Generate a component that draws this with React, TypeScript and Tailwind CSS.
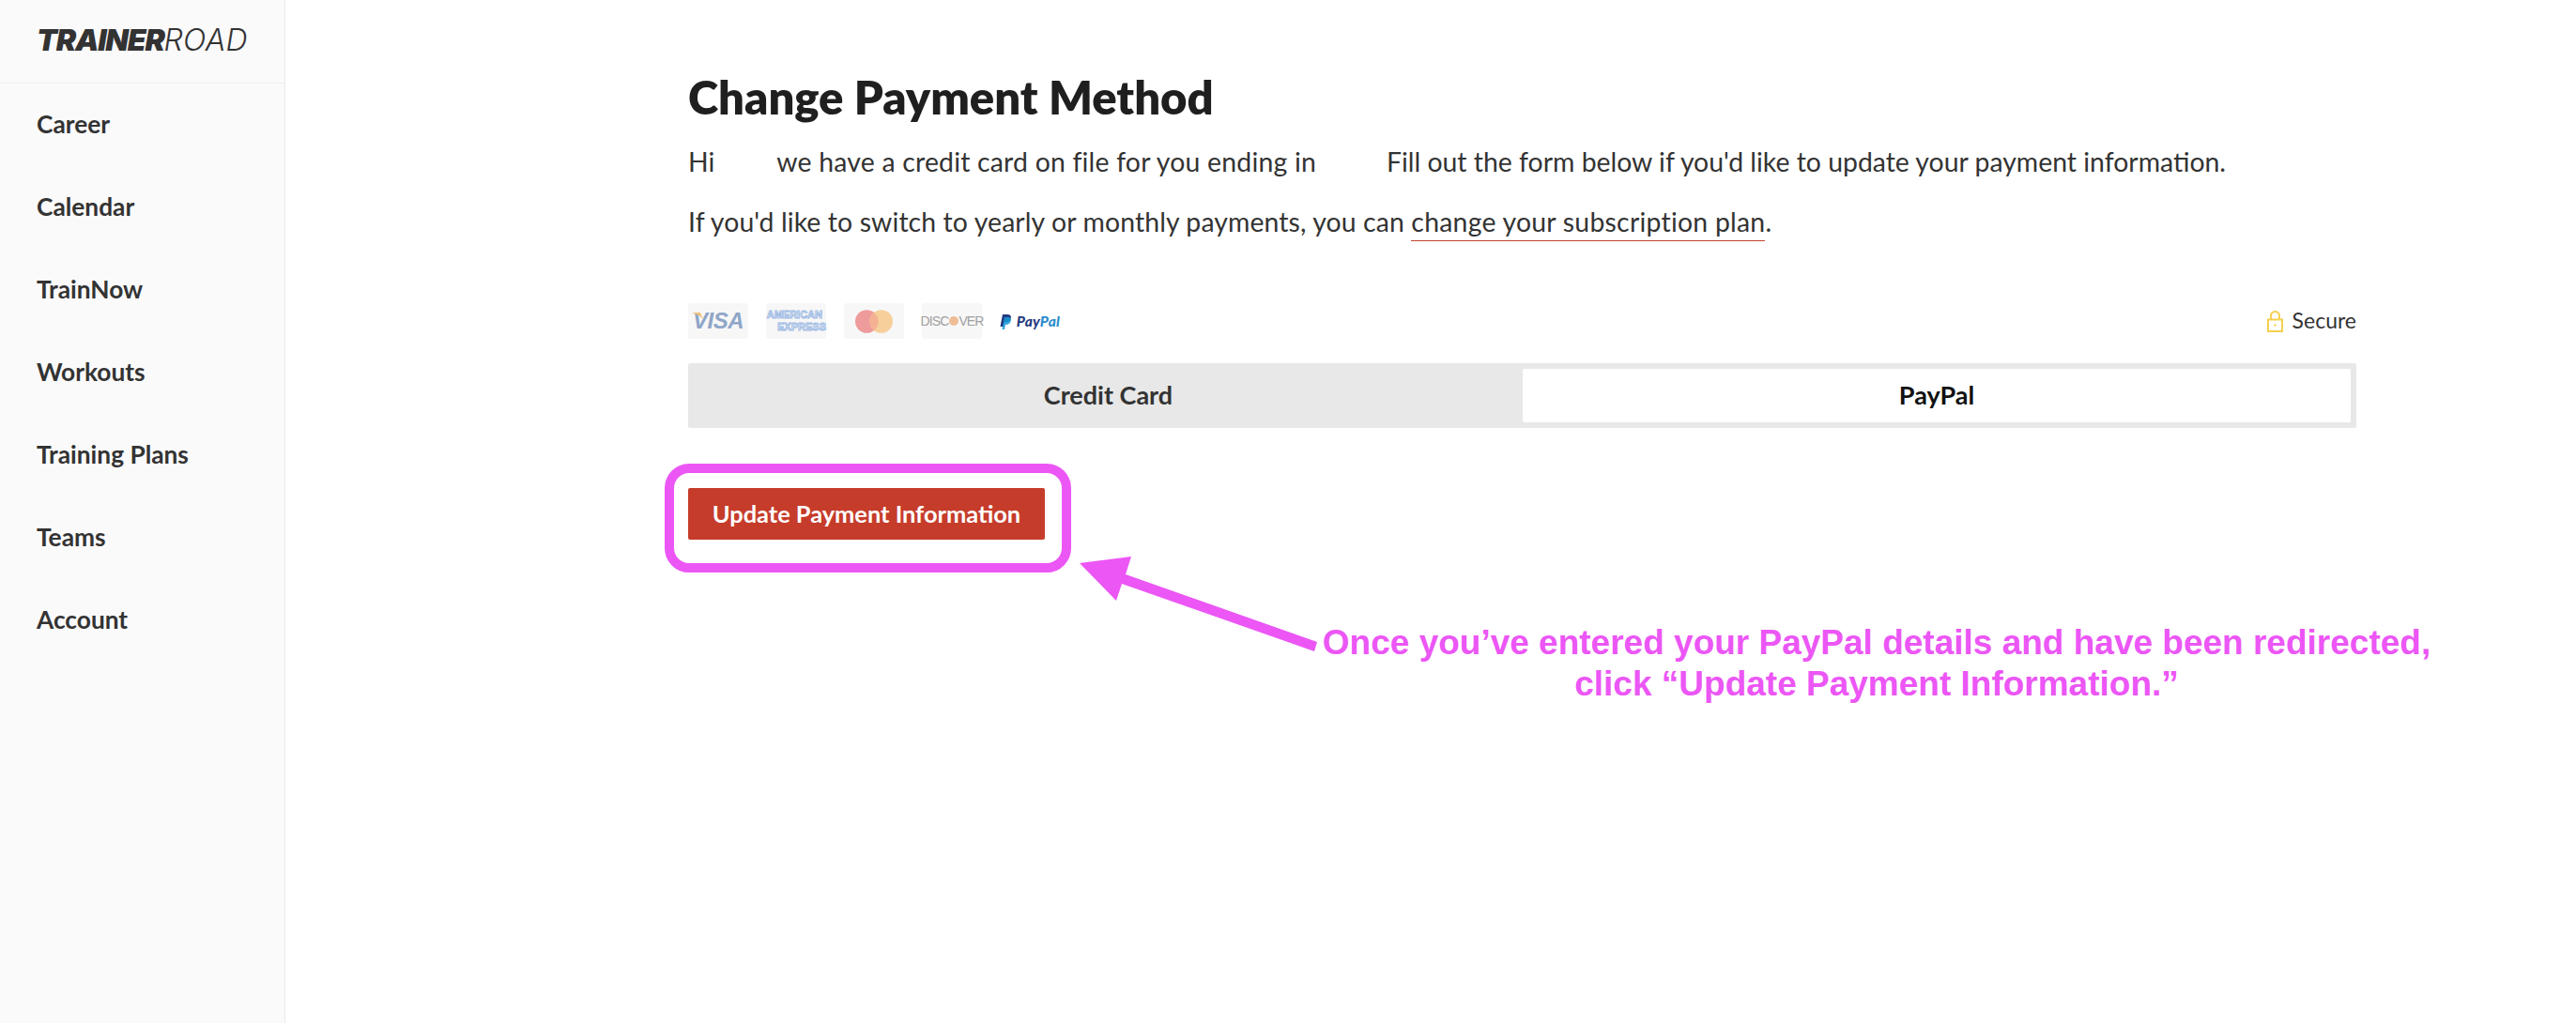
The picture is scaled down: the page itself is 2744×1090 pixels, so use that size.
import React from "react";

const navItems = ["Career", "Calendar", "TrainNow", "Workouts", "Training Plans", "Teams", "Account"];

const body = "font-['Lato','Open_Sans',sans-serif]";

const CardBox = ({ children }: { children: React.ReactNode }) => (
  <div className="relative w-16 h-[38px] bg-[#f7f7f7] rounded-[3px] flex items-center justify-center">
    {children}
  </div>
);

const PayPalLogo = () => (
  <div className="w-16 h-[38px] flex items-center gap-[5px] pt-[2px]">
    <svg width="13" height="16" viewBox="0 0 13 16">
      <path d="M3 0h5c3 0 4.500 1.500 4 4-.5 3-2.500 4.500-5.500 4.500H5L4 13H0.500z" fill="#253b80" />
      <path d="M5 3h4c2.500 0 3.500 1.200 3 3.500-.5 3-2.500 4.500-5.500 4.500H6l-.8 5H2.500z" fill="#179bd7" opacity="0.85" />
    </svg>
    <span className="font-['Lato',sans-serif] font-black italic text-[15.500px] leading-none tracking-[0.2px] text-[#253b80]">
      Pay<span className="text-[#2a8ccb]">Pal</span>
    </span>
  </div>
);

const Annotation = () => (
  <>
    <div className="absolute left-[708px] top-[494px] w-[433px] h-[116px] border-[10px] border-[#ec56f5] rounded-[26px]" />
    <svg className="absolute left-[1140px] top-[585px]" width="270" height="115" viewBox="1140 585 270 115">
      <path d="M1150 600 L1205 593 L1199 612 L1403 684 L1400 694 L1195 622 L1189 640 Z" fill="#ec56f5" />
    </svg>
    <div className="absolute left-[1400px] top-[663px] w-[1198px] text-center font-['Liberation_Sans',sans-serif] font-bold text-[37px] leading-[44px] text-[#ec56f5]">
      Once you’ve entered your PayPal details and have been redirected,
      <br />
      click “Update Payment Information.”
    </div>
  </>
);

export default function App() {
  return (
    <div className={`relative flex h-[1090px] bg-white text-[#333] ${body}`}>
      <aside className="w-[304px] shrink-0 bg-[#fafafa] border-r border-[#ebebeb]">
        <div className="h-[89px] border-b border-[#f0f0f0] pl-[39px] pb-[2px] flex items-center">
          <span className="font-['Inter',sans-serif] italic text-[32px] leading-none tracking-[-1.200px] text-[#333]">
            <span className="font-black">TRAINER</span>
            <span className="font-light tracking-[0.200px]">ROAD</span>
          </span>
        </div>
        <nav className="flex flex-col">
          {navItems.map((item) => (
            <a key={item} className="h-[88px] pl-[39px] flex items-center text-[26.300px] font-bold text-[#333]">
              {item}
            </a>
          ))}
        </nav>
      </aside>

      <main className="w-[1777px] ml-[429px] pt-[73px]">
        <h1 className="text-[49px] leading-[60px] font-extrabold text-[#1f1f1f]">Change Payment Method</h1>
        <p className="mt-[19px] text-[28.400px] leading-[40px] text-[#333]">
          Hi<span className="inline-block w-[66px]" />
          <span className="tracking-[0.200px]">we have a credit card on file for you ending in</span>
          <span className="inline-block w-[75px]" />Fill out the form below if you'd like to update your payment information.
        </p>
        <p className="mt-[24px] text-[28.400px] leading-[40px] text-[#333]">
          <span className="tracking-[0.110px]">If you'd like to switch to yearly or monthly payments, you can </span>
          <a className="border-b border-[#c4452f] pb-[3px] tracking-[0.240px]">change your subscription plan</a>.
        </p>

        <div className="mt-[67px] flex items-center justify-between h-[38px]">
          <div className="flex gap-[19px]">
            <CardBox>
              <svg className="absolute left-[4px] top-[10px]" width="12" height="8" viewBox="0 0 12 8">
                <path d="M0 0h9l3 7C9 3.500 5 1.500 0 0z" fill="#f0c27a" />
              </svg>
              <span className="font-['Liberation_Sans',sans-serif] font-bold italic text-[24px] tracking-[-0.500px] leading-none text-[#8fa6c8]">VISA</span>
            </CardBox>
            <CardBox>
              <span className="font-['Liberation_Sans',sans-serif] font-bold text-[11px] leading-[13px] text-white [-webkit-text-stroke:1px_#9fbbe4] text-right w-16">
                <span className="block pr-1">AMERICAN</span>
                <span className="block">EXPRESS</span>
              </span>
            </CardBox>
            <CardBox>
              <svg width="40" height="25" viewBox="0 0 40 25">
                <circle cx="12.300" cy="12.500" r="12.300" fill="#ee9b9b" />
                <circle cx="27.700" cy="12.500" r="12.300" fill="#f6cf9b" />
                <path d="M20 2.900a12.300 12.300 0 0 1 0 19.200a12.300 12.300 0 0 1 0-19.200z" fill="#f5b193" />
              </svg>
            </CardBox>
            <CardBox>
              <span className="flex items-center font-['Liberation_Sans',sans-serif] text-[14px] tracking-[-0.900px] text-[#a0a0a0]">
                DISC<span className="w-[10px] h-[10px] rounded-full bg-[#eebd95] mx-[0.500px]" />VER
              </span>
            </CardBox>
            <PayPalLogo />
          </div>
          <div className="flex items-center gap-[10px] text-[23px] text-[#333]">
            <svg width="17" height="23" viewBox="0 0 17 23" fill="none" stroke="#f5cf4f" strokeWidth="2">
              <rect x="1" y="9.500" width="15" height="12.500" />
              <path d="M4 9.500V5.500a4.500 4.500 0 0 1 9 0v4" />
              <circle cx="8.500" cy="15.500" r="1.200" fill="#f5cf4f" stroke="none" />
            </svg>
            <span className="pb-[2px]">Secure</span>
          </div>
        </div>

        <div className="mt-[26px] h-[69px] bg-[#e8e8e8] rounded-[2px] p-[6px] flex">
          <div className="w-[883px] flex items-center justify-center text-[27px] font-bold text-[#333]">Credit Card</div>
          <div className="flex-1 bg-white rounded-[2px] flex items-center justify-center text-[27px] font-bold text-[#111]">PayPal</div>
        </div>

        <button className="block mt-[64px] w-[380px] h-[55px] bg-[#c63c2b] rounded-[2px] text-white text-[25.400px] font-bold">
          Update Payment Information
        </button>
      </main>

      <Annotation />
    </div>
  );
}
